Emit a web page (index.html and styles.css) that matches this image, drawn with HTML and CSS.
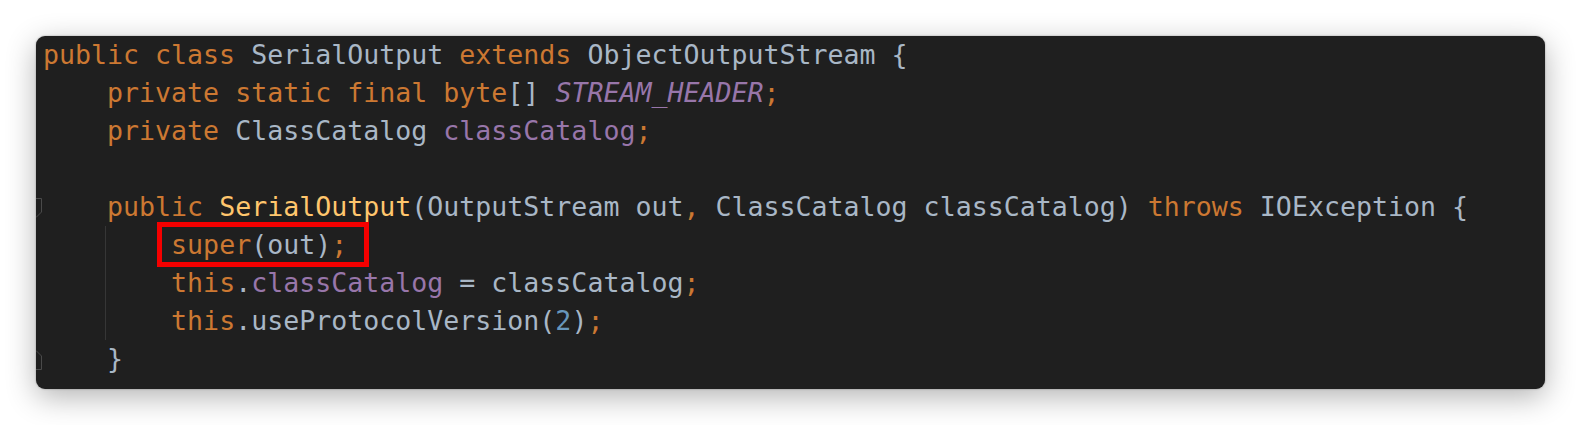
FILE: index.html
```html
<!DOCTYPE html>
<html lang="en">
<head>
<meta charset="utf-8">
<title>SerialOutput</title>
<link rel="stylesheet" href="styles.css">
</head>
<body>
<div class="panel">
  <div class="code">
    <div class="line"><span class="kw">public class </span>SerialOutput <span class="kw">extends </span>ObjectOutputStream {</div>
    <div class="line">    <span class="kw">private static final byte</span>[] <span class="const">STREAM_HEADER</span><span class="kw">;</span></div>
    <div class="line">    <span class="kw">private </span>ClassCatalog <span class="field">classCatalog</span><span class="kw">;</span></div>
    <div class="line"> </div>
    <div class="line fold"><svg class="marker" width="6" height="20" viewBox="0 0 6 20"><path d="M-6 0.5 H5.5 V14 L0 19.5 L-6 14" fill="none" stroke="#4a4a4a" stroke-width="1"/></svg>    <span class="kw">public </span><span class="method">SerialOutput</span>(OutputStream out<span class="kw">, </span>ClassCatalog classCatalog) <span class="kw">throws </span>IOException {</div>
    <div class="line guide">        <span class="mark"><span class="kw">super</span>(out)<span class="kw">;</span></span></div>
    <div class="line guide">        <span class="kw">this</span>.<span class="field">classCatalog </span>= classCatalog<span class="kw">;</span></div>
    <div class="line guide">        <span class="kw">this</span>.useProtocolVersion(<span class="num">2</span>)<span class="kw">;</span></div>
    <div class="line fold end"><svg class="marker" width="6" height="20" viewBox="0 0 6 20"><path d="M-6 19.5 H5.5 V6 L0 0.5 L-6 6" fill="none" stroke="#4a4a4a" stroke-width="1"/></svg>    }</div>
  </div>
</div>
</body>
</html>
```

FILE: styles.css
```css
html, body {
  margin: 0;
  padding: 0;
  background: #ffffff;
}

body {
  padding: 36px 37px 36px 36px;
}

.panel {
  background: #1f1f1f;
  border-radius: 9px;
  box-shadow: 0 8px 30px rgba(0, 0, 0, 0.30), 0 0 2px rgba(0, 0, 0, 0.35);
  padding: 0 0 11px 7px;
  height: 342px;
  overflow: hidden;
  position: relative;
}

.code {
  font-family: "DejaVu Sans Mono", "Liberation Mono", monospace;
  font-size: 26.6px;
  line-height: 38px;
  color: #a9b7c6;
}

.line {
  height: 38px;
  position: relative;
  white-space: pre;
}

.guide::before {
  content: "";
  position: absolute;
  left: 62px;
  top: 0;
  bottom: 0;
  width: 1px;
  background: #363636;
}

.marker {
  position: absolute;
  left: -7px;
  top: 10px;
}

.kw { color: #cc7832; }
.field { color: #9876aa; }
.const { color: #9876aa; font-style: italic; }
.method { color: #ffc66d; }
.num { color: #6897bb; }

.mark {
  display: inline-block;
  position: relative;
  line-height: 38px;
}

.mark::after {
  content: "";
  position: absolute;
  left: -14px;
  right: -22px;
  top: -4px;
  bottom: -3px;
  border: 5px solid #f50000;
}
```
